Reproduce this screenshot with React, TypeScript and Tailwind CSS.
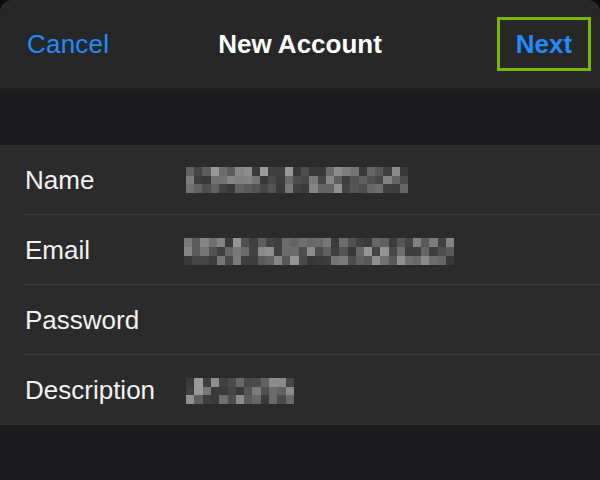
import React from "react";

function makeShades(seed: number, n: number): string[] {
  let s = seed;
  const out: string[] = [];
  for (let i = 0; i < n; i++) {
    s = (s * 1103515245 + 12345) % 2147483648;
    const r = s / 2147483648;
    const v = Math.round(0x38 + Math.pow(r, 1.6) * 0x62);
    const h = v.toString(16).padStart(2, "0");
    out.push(`#${h}${h}${h}`);
  }
  return out;
}

function Pixelated({ cols, rows, seed, className }: { cols: number; rows: number; seed: number; className: string }) {
  const shades = makeShades(seed, cols * rows);
  return (
    <div
      className={`grid shrink-0 ${className}`}
      style={{ gridTemplateColumns: `repeat(${cols}, 1fr)`, gridTemplateRows: `repeat(${rows}, 1fr)` }}
    >
      {shades.map((c, i) => (
        <div key={i} style={{ background: c }} />
      ))}
    </div>
  );
}

function Row({ label, children, last }: { label: string; children?: React.ReactNode; last?: boolean }) {
  return (
    <div className="flex flex-col">
      <div className="h-[69px] flex items-center">
        <div className="w-[186px] shrink-0 pl-[25px] text-[26px] text-[#f2f2f2] leading-none">{label}</div>
        <div className="flex-1 flex items-center">{children}</div>
      </div>
      {!last && <div className="ml-[24px] h-px bg-[#3a3a3a]" />}
    </div>
  );
}

export default function App() {
  return (
    <div className="w-[600px] h-[480px] bg-[#0c0c0c] overflow-hidden" style={{ fontFamily: '"Liberation Sans", Arial, sans-serif' }}>
      <div className="h-full rounded-t-[12px] bg-[#1c1c1e] flex flex-col overflow-hidden">
        <div className="h-[89px] shrink-0 bg-[#272727] border-b border-[#202020] flex items-center justify-between relative">
          <div className="pl-[27px] text-[26px] text-[#1f8cff] leading-none tracking-[0.2px]">Cancel</div>
          <div className="absolute left-0 right-0 text-center text-[26px] font-bold text-white leading-none pointer-events-none">
            New Account
          </div>
          <div className="mr-[9px] w-[94px] h-[54px] border-[3px] border-[#76b900] flex items-center justify-center">
            <span className="text-[26px] font-bold text-[#1f8cff] leading-none">Next</span>
          </div>
        </div>
        <div className="h-[56px] shrink-0" />
        <div className="bg-[#2b2b2b] border-b border-[#333333] shrink-0">
          <Row label="Name">
            <Pixelated cols={27} rows={3} seed={7} className="w-[222px] h-[26px] mt-[1px]" />
          </Row>
          <Row label="Email">
            <Pixelated cols={33} rows={3} seed={19} className="w-[270px] h-[27px] ml-[-2px] mt-[3px]" />
          </Row>
          <Row label="Password" />
          <Row label="Description" last>
            <Pixelated cols={13} rows={3} seed={41} className="w-[108px] h-[26px] mt-[3px]" />
          </Row>
        </div>
      </div>
    </div>
  );
}
